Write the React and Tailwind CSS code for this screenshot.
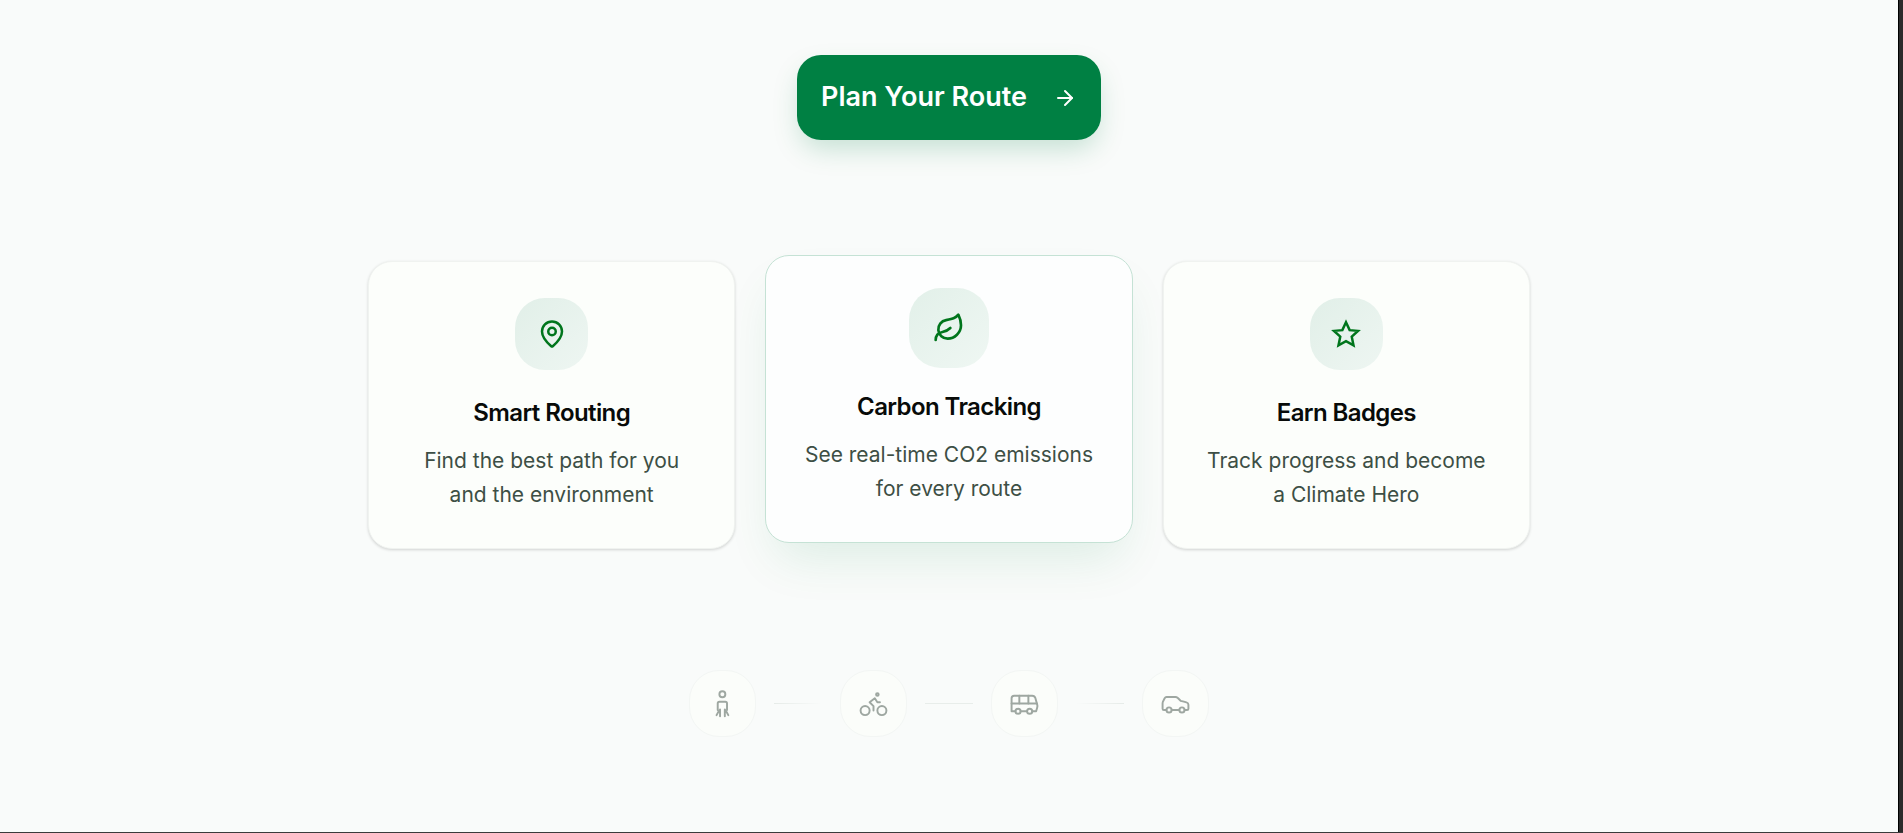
import { ArrowRight, Bike, Bus, Car, Leaf, MapPin } from "lucide-react";

const StarOutline = ({ className }) => (
  <svg className={className} viewBox="0 0 24 24" fill="none" stroke="currentColor" strokeWidth="2" aria-hidden="true">
    <path d="M12 2.6l2.9 6.3 6.7.6-5 4.6 1.4 6.9-6-3.3-6 3.3 1.4-6.9-5-4.6 6.7-.6z" />
  </svg>
);

const Walk = ({ className }) => (
  <svg
    className={className}
    viewBox="0 0 24 24"
    fill="none"
    stroke="currentColor"
    strokeWidth="1.5"
    strokeLinecap="round"
    strokeLinejoin="round"
    aria-hidden="true"
  >
    <circle cx="11.9" cy="4.8" r="2.3" />
    <path d="M8.3 17v-5a1.3 1.3 0 0 1 1.3-1.3h4.6a1.3 1.3 0 0 1 1.3 1.3v5" />
    <path d="M10.1 16.6v5.2M13.8 16.6v5.2M9.6 17l-2.2 4M14.3 17l2.2 4" />
  </svg>
);

const features = [
  {
    icon: MapPin,
    title: "Smart Routing",
    lines: ["Find the best path for you", "and the environment"],
  },
  {
    icon: Leaf,
    title: "Carbon Tracking",
    lines: ["See real-time CO2 emissions", "for every route"],
    active: true,
  },
  {
    icon: StarOutline,
    title: "Earn Badges",
    lines: ["Track progress and become", "a Climate Hero"],
  },
];

const modes = [
  { icon: Walk, line: "bg-gradient-to-r from-[#e6ebe8] to-transparent" },
  { icon: Bike, line: "bg-[#e8edea]" },
  { icon: Bus, line: "bg-gradient-to-l from-[#e6ebe8] to-transparent" },
  { icon: Car },
];

const FeatureCard = ({ icon: Icon, title, lines, active }) => (
  <article
    className={
      active
        ? "flex -translate-y-1.5 flex-col items-center rounded-3xl border border-[#c5e2d5] bg-[#fdfefe] px-8 pt-8 pb-9 text-center shadow-[0_25px_50px_-12px_rgba(0,128,64,0.12)]"
        : "flex flex-col items-center rounded-3xl border border-[#f0f3f0] bg-[#fcfefb] px-8 pt-9 pb-9 text-center shadow-[0_1px_3px_rgba(0,0,0,0.16)]"
    }
  >
    <div
      className={
        active
          ? "mb-[21px] flex size-20 items-center justify-center rounded-[32px] bg-gradient-to-br from-[#e2f0e9] to-[#eff7f3] text-[#00751c]"
          : "mb-[25px] flex h-[72px] w-[73px] items-center justify-center rounded-[30px] bg-gradient-to-br from-[#e1efe8] to-[#eef6f2] text-[#00751c]"
      }
    >
      <Icon className={active ? "size-8" : "size-[30px]"} />
    </div>
    <h3 className="mb-[13px] text-2xl leading-9 font-semibold tracking-tight text-[#080b09]">{title}</h3>
    <p className="text-[21px] leading-[34px] text-[#3d4f45]">
      {lines[0]}
      <br />
      {lines[1]}
    </p>
  </article>
);

export default function App() {
  return (
    <div className="flex min-h-screen border-b border-[#3a3a3a] bg-[#f9fbfa] font-['Inter',sans-serif]">
      <main className="flex flex-1 flex-col items-center px-8 pt-[55px]">
        <button
          type="button"
          className="flex h-[85px] items-center gap-[26px] rounded-3xl bg-[#008043] px-6 text-[27px] font-semibold text-white shadow-[0_12px_28px_-4px_rgba(0,128,67,0.22)]"
        >
          Plan Your Route
          <ArrowRight className="size-6" strokeWidth={2} />
        </button>

        <section className="mt-[121px] grid w-full max-w-[1162px] grid-cols-3 gap-[30px]">
          {features.map((feature) => (
            <FeatureCard key={feature.title} {...feature} />
          ))}
        </section>

        <div className="mt-[121px] flex items-center gap-[18px]">
          {modes.map(({ icon: Icon, line }, index) => (
            <div key={index} className="flex items-center gap-[18px]">
              <div className="flex size-[67px] items-center justify-center rounded-[30px] border border-[#f3f6f4] bg-[#fbfdfa] text-[#9ea7a1]">
                <Icon className="size-[31px]" strokeWidth={1.5} />
              </div>
              {line && <div className={`h-px w-12 ${line}`} />}
            </div>
          ))}
        </div>
      </main>
      <div className="w-[5px] border-l border-black bg-[#2b2b2b]" />
    </div>
  );
}
